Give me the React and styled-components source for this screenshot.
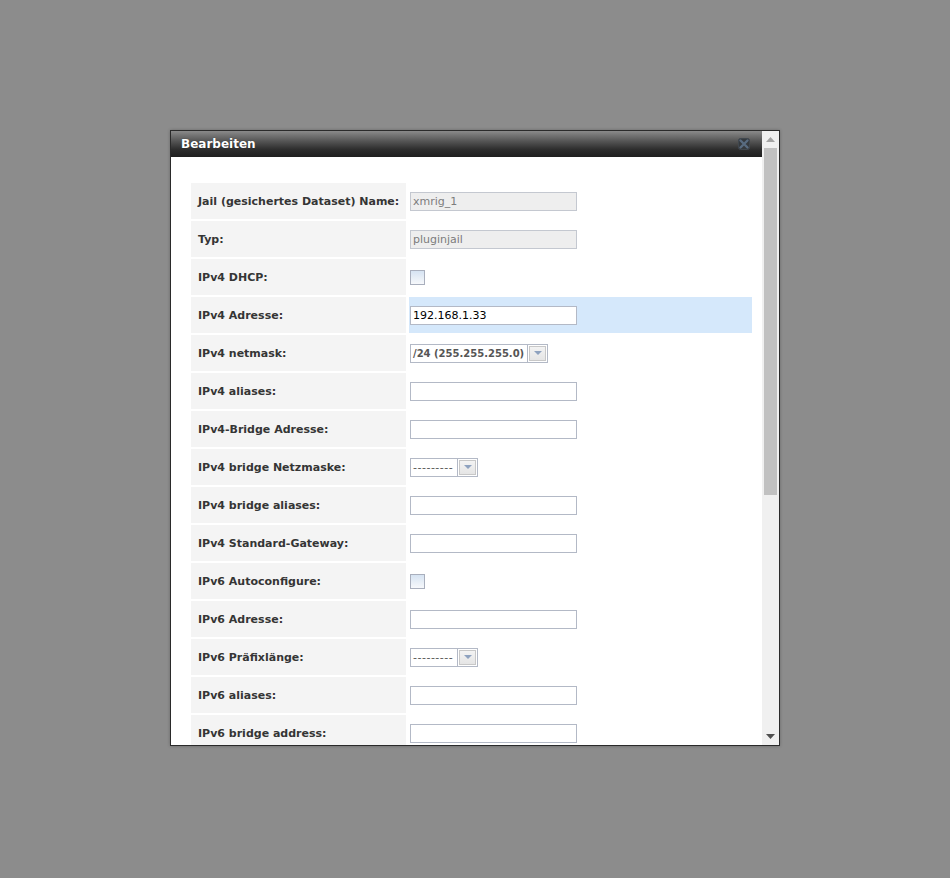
import React from 'react'
import styled, { createGlobalStyle, css } from 'styled-components'

const GlobalStyle = createGlobalStyle`
  html, body {
    margin: 0;
    padding: 0;
    height: 100%;
  }
  body {
    background: #8c8c8c;
    font-family: "DejaVu Sans", Verdana, sans-serif;
  }
  #root {
    height: 100%;
  }
`

const Overlay = styled.div`
  height: 100%;
  box-sizing: border-box;
  padding-bottom: 2px;
  display: flex;
  align-items: center;
  justify-content: center;
`

const Dialog = styled.div`
  width: 610px;
  height: 616px;
  box-sizing: border-box;
  border: 1px solid #2a2a2a;
  background: #fff;
  display: flex;
  flex-direction: row;
  box-shadow: 0 0 3px rgba(0,0,0,0.25);
`

const Main = styled.div`
  flex: 1;
  display: flex;
  flex-direction: column;
  overflow: hidden;
`

const TitleBar = styled.div`
  height: 26px;
  flex: 0 0 26px;
  display: flex;
  align-items: center;
  justify-content: space-between;
  padding: 0 12px 0 10px;
  background: linear-gradient(to bottom, #8a8a8a 0%, #5a5a5a 35%, #2e2e2e 70%, #1f1f1f 100%);
  h1 {
    margin: 0;
    font-size: 12px;
    font-weight: 700;
    color: #fff;
    text-shadow: 0 0 1px rgba(0,0,0,0.6);
  }
`

const Close = styled.span`
  display: flex;
  width: 12px;
  height: 12px;
  cursor: pointer;
`

const Body = styled.div`
  flex: 1;
  padding: 26px 10px 0 20px;
  overflow: hidden;
`

const Form = styled.div`
  display: grid;
  grid-template-columns: 215px 343px;
  column-gap: 3px;
  row-gap: 2px;
`

const Label = styled.div`
  height: 36px;
  background: #f4f4f4;
  display: flex;
  align-items: center;
  padding-left: 7px;
  font-size: 11px;
  font-weight: 700;
  color: #353535;
`

const Value = styled.div`
  height: 36px;
  display: flex;
  align-items: center;
  padding-left: 1px;
  ${p => p.$active && css`
    background: #d5e8fb;
  `}
`

const TextInput = styled.input`
  width: 167px;
  height: 19px;
  box-sizing: border-box;
  margin: 0;
  border: 1px solid #b3b9c6;
  padding: 0 2px;
  font-family: "DejaVu Sans", Verdana, sans-serif;
  font-size: 11px;
  color: #000;
  background: #fff;
  outline: none;
  &:disabled {
    background: #eeeeee;
    color: #7c7c7c;
    border-color: #c4c8d0;
  }
`

const Check = styled.span`
  width: 15px;
  height: 15px;
  box-sizing: border-box;
  border: 1px solid #a9afbd;
  background: linear-gradient(to bottom, #d6e3f2 0%, #edf2f8 70%, #f6f8fb 100%);
`

const Select = styled.div`
  display: flex;
  height: 19px;
  box-sizing: border-box;
  border: 1px solid #b3b9c6;
  background: #fff;
`

const SelectText = styled.span`
  display: flex;
  align-items: center;
  padding: 0 3px 0 2px;
  min-width: ${p => p.$min || 0}px;
  box-sizing: border-box;
  font-size: ${p => (p.$bold ? '10px' : '11px')};
  font-weight: ${p => (p.$bold ? 700 : 400)};
  color: #555;
  border-right: 1px solid #b3b9c6;
  letter-spacing: ${p => (p.$bold ? '0' : '0.5px')};
`

const SelectButton = styled.span`
  width: 19px;
  display: flex;
  align-items: center;
  justify-content: center;
  box-sizing: border-box;
  border: 1px solid #fff;
  outline: 1px solid #c8c8c8;
  outline-offset: -2px;
  background: linear-gradient(to bottom, #f4f4f4, #e4e4e4);
`

const Scrollbar = styled.div`
  width: 17px;
  flex: 0 0 17px;
  background: #f0f0f0;
  display: flex;
  flex-direction: column;
  align-items: center;
`

const ScrollArrow = styled.span`
  height: 17px;
  flex: 0 0 17px;
  display: flex;
  align-items: center;
  justify-content: center;
`

const ScrollTrack = styled.div`
  flex: 1;
  width: 100%;
  display: flex;
  flex-direction: column;
  align-items: center;
`

const Thumb = styled.div`
  width: 13px;
  height: 347px;
  background: #c1c1c1;
`

const CloseIcon = () => (
  <svg width="12" height="12" viewBox="0 0 12 12">
    <rect x="0.5" y="0.5" width="11" height="11" rx="2" fill="#363a3e" stroke="#40474e" />
    <path d="M2.5 2.5 L9.5 9.5 M9.5 2.5 L2.5 9.5" stroke="#586b80" strokeWidth="2.4" strokeLinecap="round" />
  </svg>
)

const Arrow = ({ up, color }) => (
  <svg width="9" height="5" viewBox="0 0 9 5">
    <path d={up ? 'M0 5 L4.5 0 L9 5 Z' : 'M0 0 L9 0 L4.5 5 Z'} fill={color} />
  </svg>
)

const SmallArrow = () => (
  <svg width="8" height="5" viewBox="0 0 8 5">
    <path d="M0 0 L8 0 L4 4 Z" fill="#8ea2bf" />
  </svg>
)

const rows = [
  { label: 'Jail (gesichertes Dataset) Name:', type: 'text', value: 'xmrig_1', disabled: true },
  { label: 'Typ:', type: 'text', value: 'pluginjail', disabled: true },
  { label: 'IPv4 DHCP:', type: 'check' },
  { label: 'IPv4 Adresse:', type: 'text', value: '192.168.1.33', active: true },
  { label: 'IPv4 netmask:', type: 'select', value: '/24 (255.255.255.0)', bold: true },
  { label: 'IPv4 aliases:', type: 'text' },
  { label: 'IPv4-Bridge Adresse:', type: 'text' },
  { label: 'IPv4 bridge Netzmaske:', type: 'select', value: '---------' },
  { label: 'IPv4 bridge aliases:', type: 'text' },
  { label: 'IPv4 Standard-Gateway:', type: 'text' },
  { label: 'IPv6 Autoconfigure:', type: 'check' },
  { label: 'IPv6 Adresse:', type: 'text' },
  { label: 'IPv6 Präfixlänge:', type: 'select', value: '---------' },
  { label: 'IPv6 aliases:', type: 'text' },
  { label: 'IPv6 bridge address:', type: 'text' },
]

const Field = ({ row }) => {
  if (row.type === 'check') return <Check />
  if (row.type === 'select') {
    return (
      <Select>
        <SelectText $bold={row.bold} $min={row.bold ? 0 : 47}>{row.value}</SelectText>
        <SelectButton><SmallArrow /></SelectButton>
      </Select>
    )
  }
  return <TextInput type="text" defaultValue={row.value || ''} disabled={row.disabled} />
}

export default function App() {
  return (
    <>
      <GlobalStyle />
      <Overlay>
        <Dialog>
          <Main>
            <TitleBar>
              <h1>Bearbeiten</h1>
              <Close><CloseIcon /></Close>
            </TitleBar>
            <Body>
              <Form>
                {rows.map(row => (
                  <React.Fragment key={row.label}>
                    <Label>{row.label}</Label>
                    <Value $active={row.active}><Field row={row} /></Value>
                  </React.Fragment>
                ))}
              </Form>
            </Body>
          </Main>
          <Scrollbar>
            <ScrollArrow><Arrow up color="#a3a3a3" /></ScrollArrow>
            <ScrollTrack><Thumb /></ScrollTrack>
            <ScrollArrow><Arrow color="#505050" /></ScrollArrow>
          </Scrollbar>
        </Dialog>
      </Overlay>
    </>
  )
}
